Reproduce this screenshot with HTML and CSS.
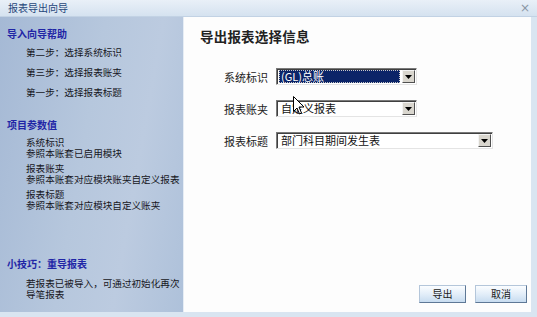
FILE: index.html
```html
<!DOCTYPE html>
<html>
<head>
<meta charset="utf-8">
<link rel="stylesheet" href="styles.css">
</head>
<body>
<div class="window">
  <div class="titlebar">
    <span class="title">报表导出向导</span>
    <span class="close">×</span>
  </div>
  <div class="frame">
    <div class="sidebar">
      <div class="head h1">导入向导帮助</div>
      <div class="steps">
        <div>第二步：选择系统标识</div>
        <div>第三步：选择报表账夹</div>
        <div>第一步：选择报表标题</div>
      </div>
      <div class="head h2">项目参数值</div>
      <div class="params">
        <div class="group"><div>系统标识</div><div>参照本账套已启用模块</div></div>
        <div class="group"><div>报表账夹</div><div>参照本账套对应模块账夹自定义报表</div></div>
        <div class="group"><div>报表标题</div><div>参照本账套对应模块自定义账夹</div></div>
      </div>
      <div class="head h3">小技巧：重导报表</div>
      <div class="tips">
        <div>若报表已被导入，可通过初始化再次</div>
        <div>导笔报表</div>
      </div>
    </div>
    <div class="main">
      <div class="heading">导出报表选择信息</div>
      <div class="form">
        <div class="row">
          <span class="label">系统标识</span>
          <div class="select short">
            <div class="value selected"><span>(GL)总账</span></div>
            <div class="arrow"><svg width="7" height="4" viewBox="0 0 7 4"><path d="M0 0H7L3.5 4Z" fill="#000"/></svg></div>
          </div>
        </div>
        <div class="row">
          <span class="label">报表账夹</span>
          <div class="select short">
            <div class="value">自定义报表</div>
            <div class="arrow"><svg width="7" height="4" viewBox="0 0 7 4"><path d="M0 0H7L3.5 4Z" fill="#000"/></svg></div>
          </div>
        </div>
        <div class="row">
          <span class="label">报表标题</span>
          <div class="select long">
            <div class="value">部门科目期间发生表</div>
            <div class="arrow"><svg width="7" height="4" viewBox="0 0 7 4"><path d="M0 0H7L3.5 4Z" fill="#000"/></svg></div>
          </div>
        </div>
      </div>
      <div class="buttons">
        <button class="btn b1">导出</button>
        <button class="btn b2">取消</button>
      </div>
      <svg class="cursor" width="12" height="19" viewBox="0 0 12 19"><path d="M0.5 0.5V15.5L4 12L6.5 18L8.5 17L6 11H11Z" fill="#fff" stroke="#000" stroke-width="1"/></svg>
    </div>
  </div>
</div>
</body>
</html>
```

FILE: styles.css
```css
* { box-sizing: border-box; margin: 0; padding: 0; }
html, body { width: 537px; height: 317px; overflow: hidden; }
body { font-family: "Noto Sans CJK SC", "DejaVu Sans", sans-serif; background: #d8e4f0; }
.window { width: 537px; height: 317px; display: flex; flex-direction: column; background: #d9e5f1; }
.titlebar {
  height: 17px; display: flex; align-items: center; justify-content: space-between;
  padding: 0 7px 0 8px;
  background: linear-gradient(#e9f0f8, #d5e2f0);
  border-bottom: 1px solid #c2d2e4;
}
.title { font-size: 10px; line-height: 12px; color: #25467a; }
.close { font-family: "DejaVu Sans", sans-serif; font-size: 12px; line-height: 12px; color: #8a96a4; }
.frame { flex: 1; display: flex; padding: 0 6px 5px 0; }
.sidebar {
  width: 183px; padding: 11px 0 0 7px;
  background: linear-gradient(100deg, #a5b9d5 0%, #b6c7dd 45%, #bccbe0 70%, #aec1da 100%);
  color: #161622; font-size: 9.6px;
}
.head { font-weight: bold; color: #1f25a6; font-size: 10px; line-height: 12px; }
.steps { margin-top: 2px; padding-left: 19px; line-height: 20px; }
.h2 { margin-top: 17px; }
.params { margin-top: 6px; padding-left: 19px; line-height: 11px; display: flex; flex-direction: column; gap: 4px; }
.h3 { margin-top: 47px; }
.tips { margin-top: 8px; padding-left: 19px; line-height: 11px; }
.main {
  flex: 1; position: relative; background: #fdfdfd; display: flex; flex-direction: column;
  border-left: 1px solid #e6edf5; padding: 11px 4px 9px 16px;
}
.heading { font-size: 13.5px; line-height: 17px; font-weight: 600; color: #222; letter-spacing: 0.2px; }
.form { margin-top: 23px; padding-left: 24px; display: flex; flex-direction: column; gap: 15px; }
.row { display: flex; align-items: center; height: 17px; }
.label { width: 52px; font-size: 11px; line-height: 14px; color: #222; }
.select {
  height: 17px; display: flex; align-items: stretch; background: #fff;
  border: 1px solid; border-color: #7a7a7a #e4e4e4 #e4e4e4 #7a7a7a;
  box-shadow: inset 1px 1px 0 #404040;
  padding: 1px 1px 1px 2px;
}
.short { width: 141px; }
.long { width: 217px; }
.value { flex: 1; font-size: 11px; line-height: 13px; padding-left: 2px; color: #111; white-space: nowrap; }
.value.selected { background: #0b2468; color: #fff; margin-right: 2px; border: 1px dotted #c8c8c8; padding-left: 1px; line-height: 11px; }
.arrow {
  width: 13px; display: flex; align-items: center; justify-content: center;
  background: #d9d6ce; border: 1px solid; border-color: #f4f4f4 #505050 #505050 #f4f4f4;
}
.buttons { margin-top: auto; display: flex; justify-content: flex-end; gap: 9px; }
.btn {
  height: 18px; font-family: inherit; font-size: 10px; line-height: 14px; color: #1a1a1a;
  background: linear-gradient(#fbfdff, #e3eef9 50%, #c7dcf0);
  border: 1px solid; border-color: #b4c6da #5e7896 #5e7896 #b4c6da;
}
.b1 { width: 47px; }
.b2 { width: 52px; }
.cursor { position: absolute; left: 109px; top: 79px; }
```
